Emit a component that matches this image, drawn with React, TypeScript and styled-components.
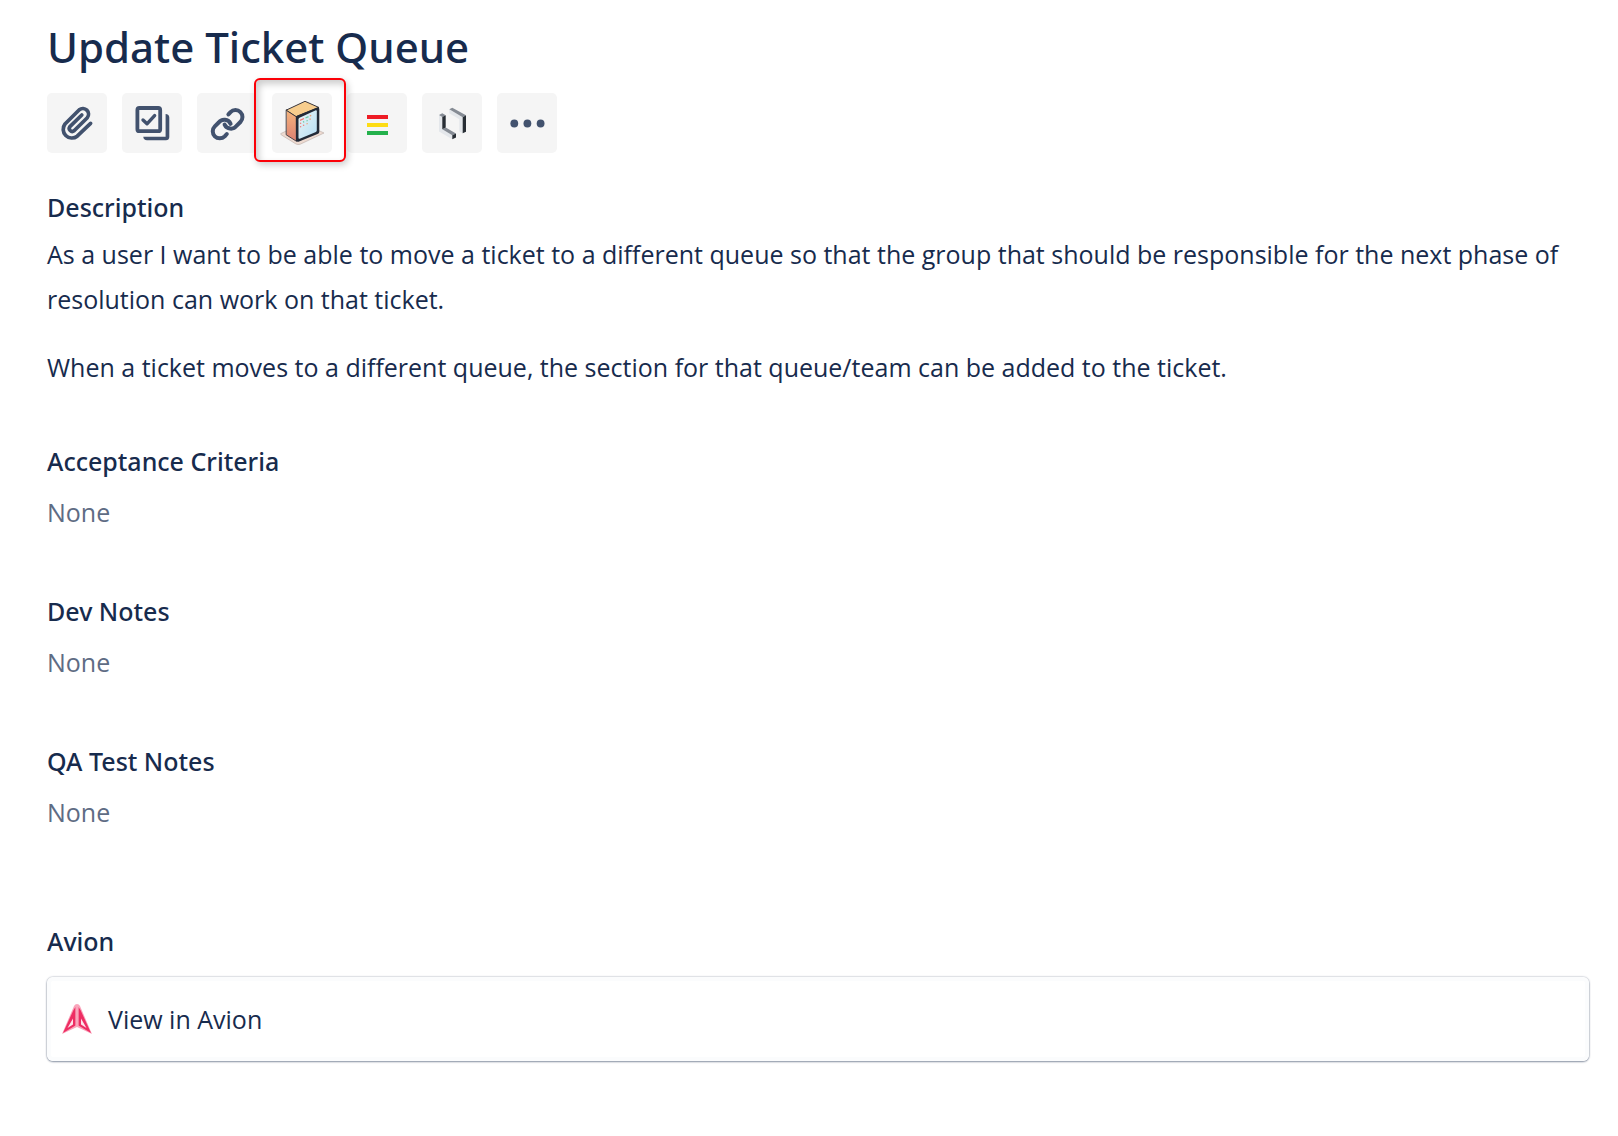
import React from "react";
import styled, { createGlobalStyle } from "styled-components";

const ink = "#172b4d";
const iconInk = "#42526e";
const headingFont = `"Segoe UI", "Noto Sans", "Open Sans", sans-serif`;

const GlobalStyle = createGlobalStyle`
  * { box-sizing: border-box; }
  body {
    margin: 0;
    background: #fff;
    color: ${ink};
    font-family: "Segoe UI", "Open Sans", "Noto Sans", sans-serif;
    font-size: 25px;
    font-weight: 400;
    line-height: 45px;
  }
`;

const Page = styled.main`
  padding: 17px 29px 40px 47px;
`;

const Title = styled.h1`
  margin: 0 0 16px;
  font-family: ${headingFont};
  font-size: 42px;
  line-height: 60px;
  font-weight: 500;
`;

const Toolbar = styled.div`
  display: flex;
  gap: 15px;
  margin-bottom: 39px;
`;

const ToolButton = styled.button`
  position: relative;
  width: 60px;
  height: 60px;
  padding: 0;
  border: 0;
  border-radius: 5px;
  background: #f5f5f5;
  cursor: pointer;

  svg {
    display: block;
  }
`;

const Highlighted = styled.div`
  display: flex;
  position: relative;
  z-index: 1;

  &::before {
    content: "";
    position: absolute;
    inset: -15px -14px -9px -18px;
    border: 2px solid #fb0007;
    border-radius: 6px;
    background: #fff;
    box-shadow: 2px 3px 7px rgba(0, 0, 0, 0.2), inset 3px 4px 7px rgba(0, 0, 0, 0.2);
  }
`;

const Field = styled.section<{ $after?: number }>`
  margin-bottom: ${(p) => p.$after ?? 61}px;
`;

const Heading = styled.h2<{ $gap?: number }>`
  margin: 0 0 ${(p) => p.$gap ?? 14}px;
  font-family: ${headingFont};
  font-size: 25px;
  line-height: 30px;
  font-weight: 500;
`;

const Paragraph = styled.p`
  margin: 0;

  & + & {
    margin-top: 23px;
  }
`;

const Empty = styled.p`
  margin: 0;
  color: #5e6c84;
`;

const LinkCard = styled.a`
  display: flex;
  align-items: center;
  gap: 16px;
  height: 84px;
  padding: 0 15px;
  border-radius: 6px;
  background: #fff;
  color: ${ink};
  text-decoration: none;
  box-shadow: 0 1px 2px rgba(9, 30, 66, 0.4), 0 0 2px rgba(9, 30, 66, 0.4),
    inset 0 0 0 4px #fbfcfd;
`;

function Icon({ children }: { children: React.ReactNode }) {
  return (
    <svg width="60" height="60" viewBox="0 0 60 60" fill="none" strokeLinecap="round" strokeLinejoin="round" aria-hidden="true">
      {children}
    </svg>
  );
}

const AttachIcon = () => (
  <Icon>
    <path
      stroke={iconInk}
      strokeWidth="3.7"
      d="M43.6 30.4 30.2 43.2A8.7 8.7 0 0 1 18 31L32.3 16.7A5.7 5.7 0 0 1 40.3 24.7L27.1 37.8A3 3 0 0 1 22.9 33.6L34.8 22"
    />
  </Icon>
);

const ChildIssueIcon = () => (
  <Icon>
    <rect x="15.4" y="15" width="22.8" height="23.2" rx="2" stroke={iconInk} strokeWidth="3.8" />
    <path stroke={iconInk} strokeWidth="3.4" d="m21 27 4 3.8 7.6-8.2" />
    <path fill={iconInk} d="M43.600 21c2.200 0 3.700 1.400 3.700 3.600V44c0 2-1.300 3.300-3.300 3.300H25c-2.200 0-3.700-1.400-3.700-3.500h22.300z" />
  </Icon>
);

const LinkIcon = () => (
  <Icon>
    <g stroke={iconInk} strokeWidth="4">
      <path d="M31.400 21.400 33.500 19.100A7 7 0 0 1 43.400 29L39.500 32.900A7 7 0 0 1 27.600 31.600" />
      <path d="M29.800 41 27.700 43.300A7 7 0 0 1 17.800 33.400L21.700 29.500A7 7 0 0 1 33.600 30.800" />
    </g>
  </Icon>
);

const CubeIcon = () => (
  <Icon>
    <defs>
      <linearGradient id="cubeSide" x1="0" y1="0" x2="0" y2="1">
        <stop offset="0" stopColor="#f4b57c" />
        <stop offset="1" stopColor="#dc7f72" />
      </linearGradient>
      <linearGradient id="cubeScreen" x1="0" y1="0" x2="1" y2="1">
        <stop offset="0" stopColor="#e9f4f6" />
        <stop offset="1" stopColor="#b5def4" />
      </linearGradient>
    </defs>
    <path fill="#eedbd1" stroke="#b9aaa5" strokeWidth=".6" d="M9 40.500 31 30l21 10-24 11.300q-2 .6-4-.3L9.500 42z" />
    <path fill="url(#cubeSide)" stroke="#39363c" strokeWidth=".9" d="m14.500 17 10 6.300v25L14.500 42z" />
    <path fill="#f7cd8d" stroke="#39363c" strokeWidth="1" d="M14.500 17 33 8.300l14 6.200-22.500 9z" />
    <path fill="#222a37" d="M23.800 24.500q.2-1.500 1.700-2.100L45.700 14.200q1.600 0 1.600 1.800v22.800q0 1.300-1.200 1.900L26.500 48.800q-2.300.4-2.600-1.800z" />
    <path fill="url(#cubeScreen)" d="M26.500 26.500q0-1.300 1-1.800L43.800 17.300q1-.2 1 .9v19.300q0 1-.9 1.400L27.700 45.800q-1.200.3-1.200-1z" />
    <g strokeWidth="1.300" strokeLinecap="butt">
      <path stroke="#ef756e" d="m28 27.300 4-1.800M28 30.500l1.200-.5M31 32.500l1.200-.5M28 34l1.200-.5" />
      <path stroke="#70c9a0" d="m33.500 25 3-1.300M31 29.200l1.200-.5M34.500 28l1.200-.5" />
      <path stroke="#ee9c70" d="m37.800 23 1.400-.6M37.500 26.300l1.200-.5M34.500 31l1.200-.5" />
    </g>
  </Icon>
);

const BarsIcon = () => (
  <Icon>
    <path fill="#ee1c25" d="M20 22h21v4H20z" />
    <path fill="#fddc14" d="M20 30h21v4H20z" />
    <path fill="#24b14c" d="M20 38h21v4H20z" />
  </Icon>
);

const BracketsIcon = () => (
  <Icon>
    <path fill="#e4e7eb" d="m17 22 3.300 2v12.300l10 6V46.300L17 38.500zM27.300 16.300l13.400 8v16l-3.400-1.700V26.300l-10-6z" />
    <path fill="#858b94" d="m17 22 3.300-1.700 3.400 2-3.400 1.700zM20.300 36.300l3.400-1.700L34 40.600l-3.700 1.700zM27.300 16.300l3-1.600L44 22.300l-3.300 2z" />
    <path fill="#272d34" d="m20.300 24 3.400-1.700v12.300l-3.400 1.700zM30.300 42.300l3.700-1.700v4l-3.700 1.700zM40.700 24.300l3.300-2v16.400l-3.300 1.600z" />
  </Icon>
);

const MoreIcon = () => (
  <Icon>
    <g fill={iconInk}>
      <circle cx="17.300" cy="30.500" r="3.900" />
      <circle cx="30.400" cy="30.500" r="3.900" />
      <circle cx="43.600" cy="30.500" r="3.900" />
    </g>
  </Icon>
);

const AvionLogo = () => (
  <svg width="30" height="30" viewBox="0 0 30 30" aria-hidden="true">
    <path fill="#f9a5bb" d="M15 0q2 0 3 2l12 28-15-7-15 7L12 2q1-2 3-2z" />
    <path fill="#ee2d63" d="M13.500 3v18.500L1 29 11.500 6zM16.500 3v18.500L29 29 18.500 6z" />
    <path fill="#fde3ea" d="M11 14.500v6L5.500 24zM19 14.500v6l5.500 3.500z" />
    <path fill="#f9a5bb" d="M13.700 2h2.600v20h-2.600z" />
  </svg>
);

const emptyFields = [
  { name: "Acceptance Criteria" },
  { name: "Dev Notes" },
  { name: "QA Test Notes", after: 91 },
];

export default function App() {
  return (
    <>
      <GlobalStyle />
      <Page>
        <Title>Update Ticket Queue</Title>
        <Toolbar role="toolbar" aria-label="Issue actions">
          <ToolButton type="button" aria-label="Attach"><AttachIcon /></ToolButton>
          <ToolButton type="button" aria-label="Create subtask"><ChildIssueIcon /></ToolButton>
          <ToolButton type="button" aria-label="Link issue"><LinkIcon /></ToolButton>
          <Highlighted>
            <ToolButton type="button" aria-label="Open board"><CubeIcon /></ToolButton>
          </Highlighted>
          <ToolButton type="button" aria-label="Status bars"><BarsIcon /></ToolButton>
          <ToolButton type="button" aria-label="Brackets"><BracketsIcon /></ToolButton>
          <ToolButton type="button" aria-label="More actions"><MoreIcon /></ToolButton>
        </Toolbar>

        <Field $after={56}>
          <Heading $gap={10}>Description</Heading>
          <Paragraph>
            As a user I want to be able to move a ticket to a different queue so that the group that should be
            responsible for the next phase of resolution can work on that ticket.
          </Paragraph>
          <Paragraph>
            When a ticket moves to a different queue, the section for that queue/team can be added to the ticket.
          </Paragraph>
        </Field>

        {emptyFields.map((field) => (
          <Field key={field.name} $after={field.after}>
            <Heading>{field.name}</Heading>
            <Empty>None</Empty>
          </Field>
        ))}

        <section>
          <Heading $gap={21}>Avion</Heading>
          <LinkCard href="#avion">
            <AvionLogo />
            View in Avion
          </LinkCard>
        </section>
      </Page>
    </>
  );
}
